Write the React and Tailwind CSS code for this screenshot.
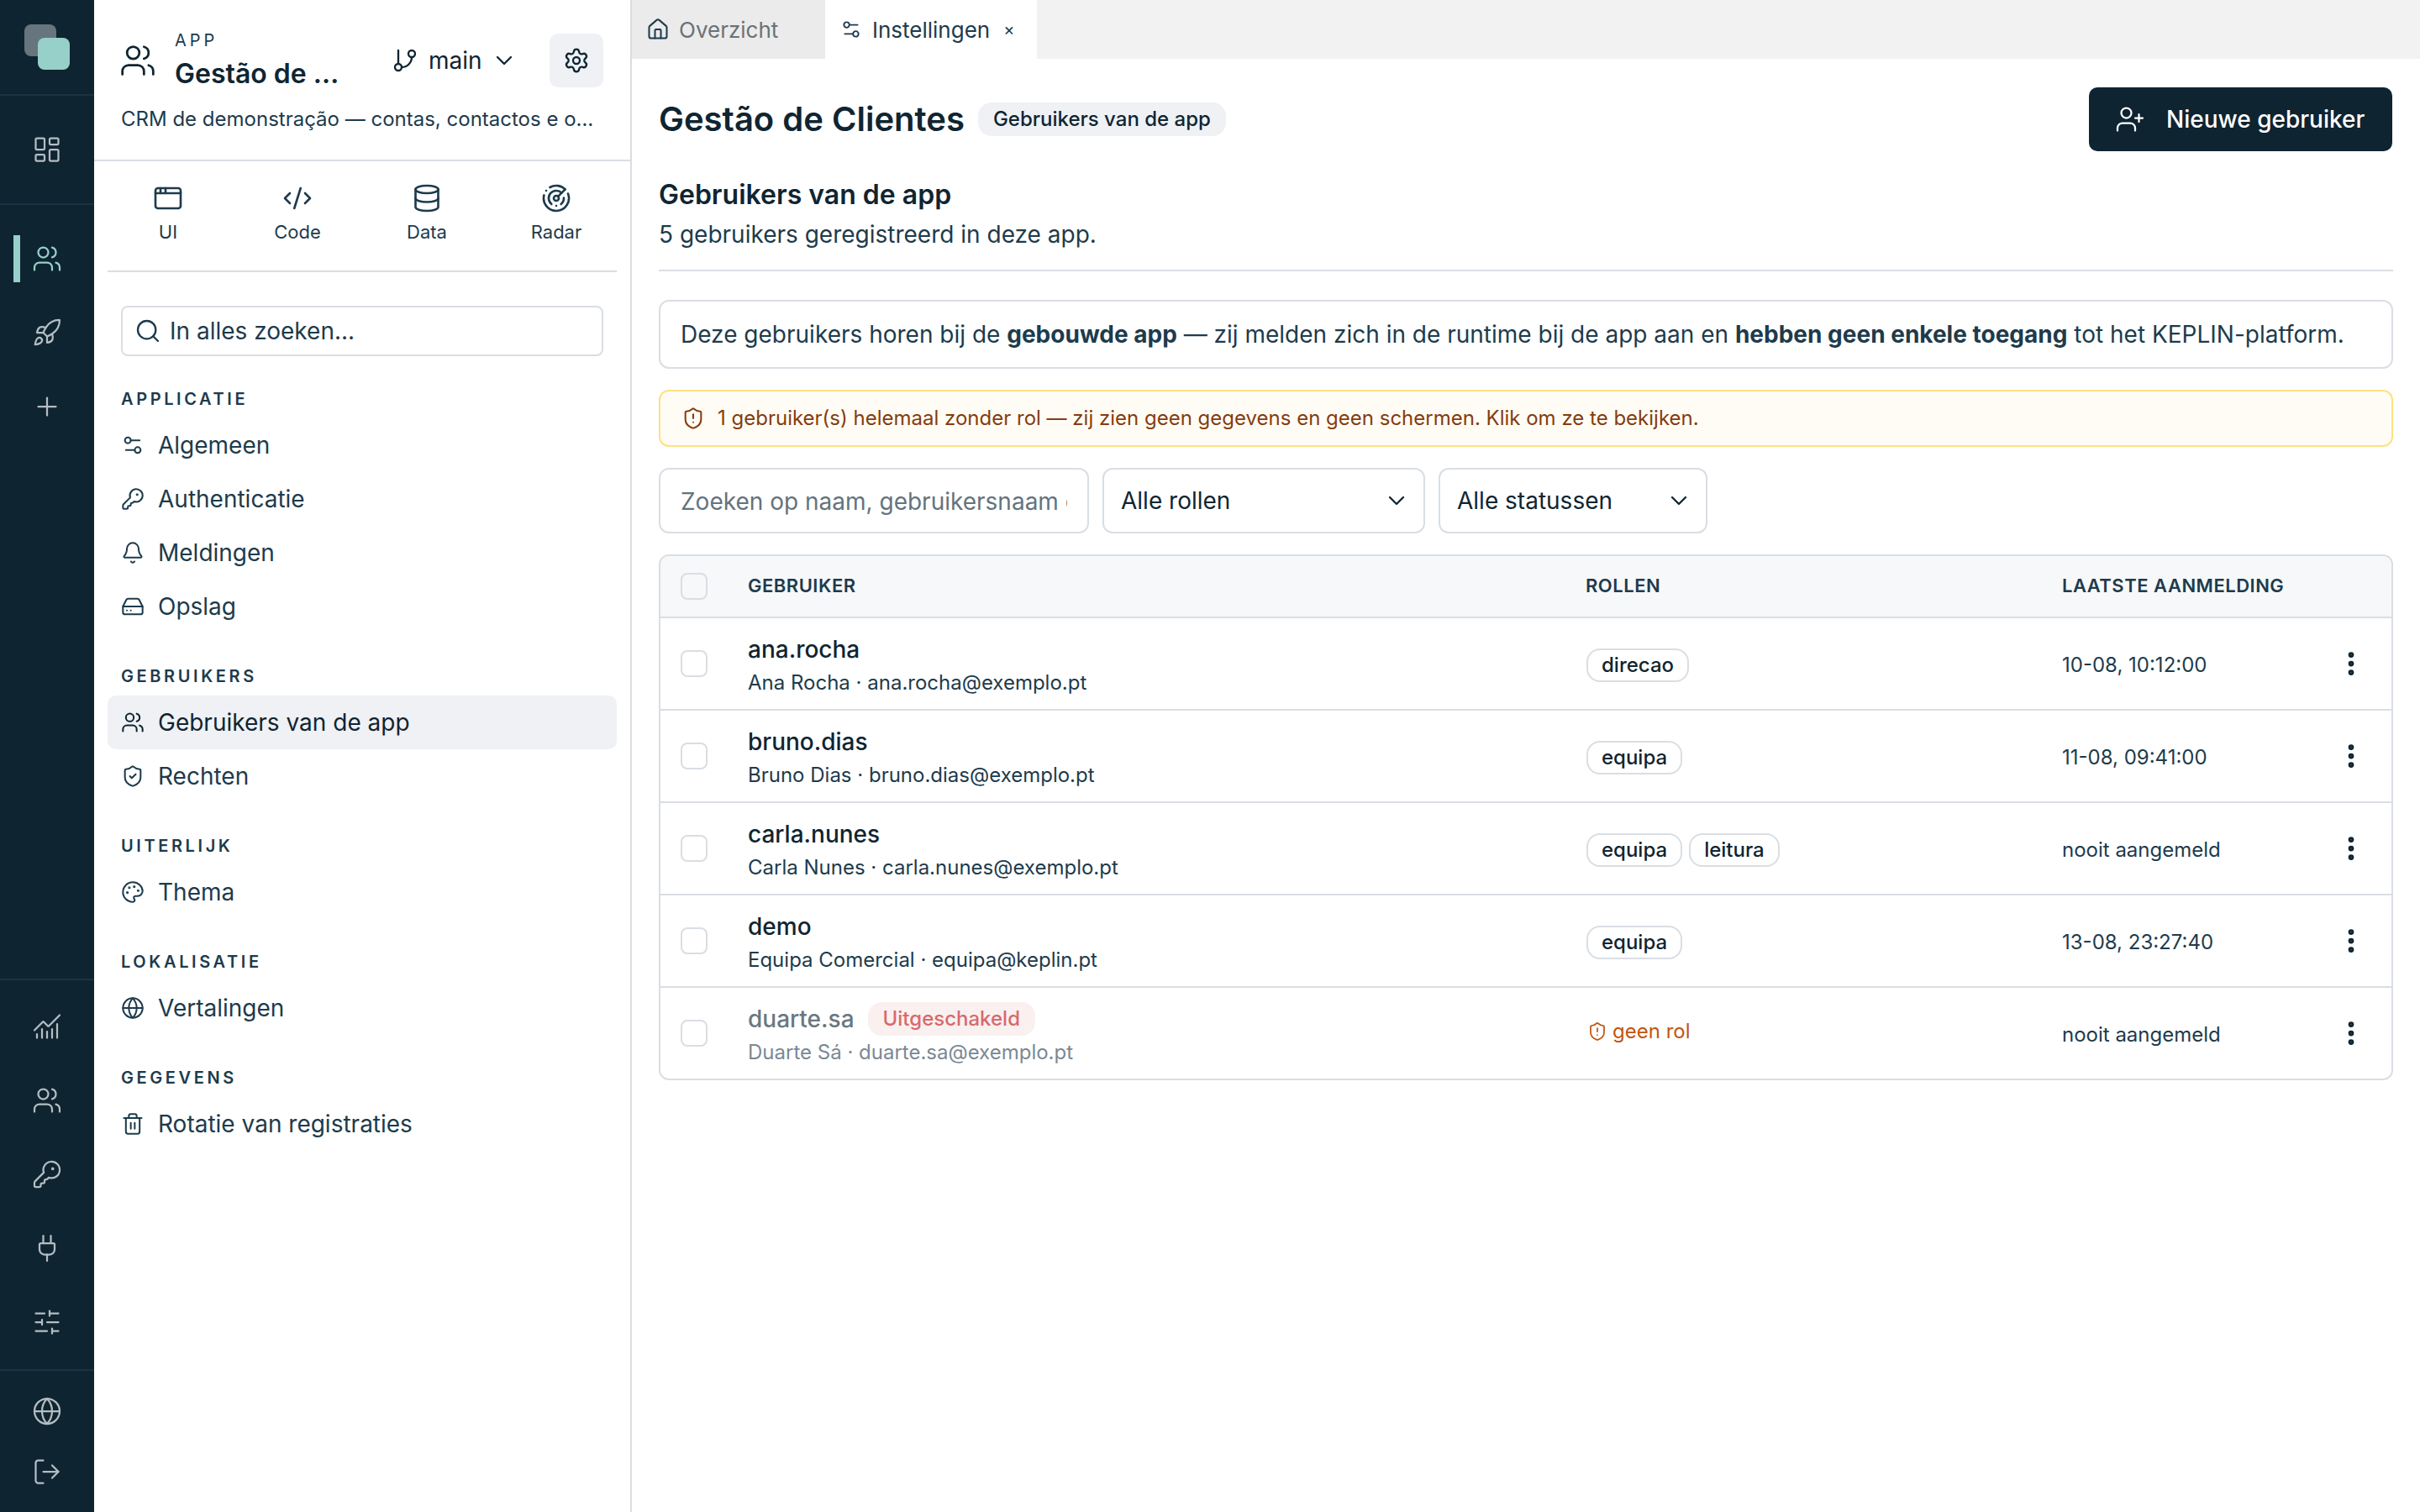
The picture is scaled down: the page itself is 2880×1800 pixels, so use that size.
import React from 'react';
import {
  LayoutDashboard, Users, Rocket, Plus, ChartNoAxesCombined, KeyRound, Plug, SlidersHorizontal, Globe, LogOut,
  GitBranch, ChevronDown, Settings, AppWindow, CodeXml, Database, Radar, Search, Settings2, Bell, HardDrive,
  ShieldCheck, Palette, Trash2, House, UserPlus, ShieldAlert, EllipsisVertical,
} from 'lucide-react';

const sections = [
  { label: 'APPLICATIE', items: [
    { icon: Settings2, text: 'Algemeen' },
    { icon: KeyRound, text: 'Authenticatie' },
    { icon: Bell, text: 'Meldingen' },
    { icon: HardDrive, text: 'Opslag' },
  ] },
  { label: 'GEBRUIKERS', items: [
    { icon: Users, text: 'Gebruikers van de app', active: true },
    { icon: ShieldCheck, text: 'Rechten' },
  ] },
  { label: 'UITERLIJK', items: [{ icon: Palette, text: 'Thema' }] },
  { label: 'LOKALISATIE', items: [{ icon: Globe, text: 'Vertalingen' }] },
  { label: 'GEGEVENS', items: [{ icon: Trash2, text: 'Rotatie van registraties' }] },
];

const users = [
  { name: 'ana.rocha', sub: 'Ana Rocha · ana.rocha@exemplo.pt', roles: ['direcao'], last: '10-08, 10:12:00' },
  { name: 'bruno.dias', sub: 'Bruno Dias · bruno.dias@exemplo.pt', roles: ['equipa'], last: '11-08, 09:41:00' },
  { name: 'carla.nunes', sub: 'Carla Nunes · carla.nunes@exemplo.pt', roles: ['equipa', 'leitura'], last: 'nooit aangemeld' },
  { name: 'demo', sub: 'Equipa Comercial · equipa@keplin.pt', roles: ['equipa'], last: '13-08, 23:27:40' },
  { name: 'duarte.sa', sub: 'Duarte Sá · duarte.sa@exemplo.pt', roles: [], last: 'nooit aangemeld', disabled: true },
];

function RailButton({ icon: Icon, active }) {
  return (
    <div className="relative flex h-[56px] w-full items-center justify-center">
      {active && <div className="absolute left-[16px] top-0 h-[56px] w-[8px] bg-[#97d0c8]" />}
      <Icon size={36} strokeWidth={1.5} className={active ? 'text-[#97d0c8]' : 'text-[#b4bdc2]'} />
    </div>
  );
}

function Rail() {
  return (
    <aside className="flex h-[1800px] w-[112px] shrink-0 flex-col bg-[#0e2431]">
      <div className="h-[114px] shrink-0 border-b-2 border-[#1a3341] pl-[29px] pt-[29px]">
        <div className="relative h-[54px] w-[54px]">
          <div className="absolute left-0 top-0 h-[38px] w-[38px] rounded-[8px] bg-[#66757e]" />
          <div className="absolute left-[16px] top-[16px] h-[38px] w-[38px] rounded-[8px] bg-[#97d0c8]" />
        </div>
      </div>
      <div className="flex h-[130px] shrink-0 items-center border-b-2 border-[#1a3341]">
        <RailButton icon={LayoutDashboard} />
      </div>
      <div className="flex flex-1 flex-col gap-[32px] pt-[36px]">
        <RailButton icon={Users} active />
        <RailButton icon={Rocket} />
        <RailButton icon={Plus} />
      </div>
      <div className="flex shrink-0 flex-col gap-[32px] border-t-2 border-[#1a3341] pb-[28px] pt-[27px]">
        <RailButton icon={ChartNoAxesCombined} />
        <RailButton icon={Users} />
        <RailButton icon={KeyRound} />
        <RailButton icon={Plug} />
        <RailButton icon={SlidersHorizontal} />
      </div>
      <div className="flex shrink-0 flex-col gap-[16px] border-t-2 border-[#1a3341] pb-[20px] pt-[20px]">
        <RailButton icon={Globe} />
        <RailButton icon={LogOut} />
      </div>
    </aside>
  );
}

function Sidebar() {
  const tools = [
    { icon: AppWindow, text: 'UI' },
    { icon: CodeXml, text: 'Code' },
    { icon: Database, text: 'Data' },
    { icon: Radar, text: 'Radar' },
  ];
  return (
    <aside className="h-[1800px] w-[640px] shrink-0 border-r-2 border-[#d9dee3] bg-white text-[#1d3b4c]">
      <div className="h-[192px] border-b-2 border-[#d9dee3] px-[32px] pt-[40px]">
        <div className="flex h-[64px] items-center">
          <Users size={44} strokeWidth={1.5} className="-ml-[2px] shrink-0 text-[#0f2532]" />
          <div className="ml-[22px] w-[204px]">
            <div className="text-[20px] leading-[22px] tracking-[0.2em]">APP</div>
            <div className="mt-[9px] truncate text-[32px] font-semibold leading-[40px] text-[#0f2532]">Gestão de Clientes</div>
          </div>
          <div className="ml-[54px] flex items-center">
            <GitBranch size={32} strokeWidth={1.75} className="text-[#0f2532]" />
            <span className="ml-[12px] text-[28px] text-[#0f2532]">main</span>
            <ChevronDown size={32} strokeWidth={1.75} className="ml-[10px] text-[#0f2532]" />
          </div>
          <div className="ml-auto flex h-[64px] w-[64px] items-center justify-center rounded-[10px] bg-[#eff1f5]">
            <Settings size={32} strokeWidth={1.75} className="text-[#0f2532]" />
          </div>
        </div>
        <div className="mt-[22px] w-[572px] truncate text-[24px] leading-[32px]">CRM de demonstração — contas, contactos e oportunidades</div>
      </div>

      <div className="ml-[16px] w-[606px] border-b-2 border-[#d9dee3]">
        <div className="-ml-[5px] grid h-[130px] w-[616px] grid-cols-4 pt-[26px]">
          {tools.map(({ icon: Icon, text }) => (
            <div key={text} className="flex flex-col items-center">
              <Icon size={36} strokeWidth={1.75} />
              <span className="mt-[7px] text-[22px] leading-[30px]">{text}</span>
            </div>
          ))}
        </div>
      </div>

      <div className="ml-[32px] mt-[40px] flex h-[60px] w-[574px] items-center rounded-[8px] border-2 border-[#d9dee3] pl-[14px]">
        <Search size={32} strokeWidth={1.75} />
        <span className="ml-[10px] text-[28px]">In alles zoeken...</span>
      </div>

      <nav className="ml-[16px] w-[606px]">
        {sections.map((s) => (
          <div key={s.label} className="mt-[36px]">
            <div className="mb-[8px] pl-[16px] text-[20px] font-semibold leading-[30px] tracking-[0.18em]">{s.label}</div>
            {s.items.map(({ icon: Icon, text, active }) => (
              <div key={text} className={`flex h-[64px] items-center rounded-[10px] pl-[16px] ${active ? 'bg-[#eff1f5] text-[#0f2532]' : ''}`}>
                <Icon size={28} strokeWidth={1.75} />
                <span className="ml-[16px] text-[28px]">{text}</span>
              </div>
            ))}
          </div>
        ))}
      </nav>
    </aside>
  );
}

function Tabs() {
  return (
    <div className="flex h-[70px] bg-[#f2f2f2]">
      <div className="flex w-[230px] items-center bg-[#ebebeb] pl-[17px] text-[#6b7176]">
        <House size={28} strokeWidth={1.75} className="text-[#1d3b4c]" />
        <span className="ml-[11px] text-[26px]">Overzicht</span>
      </div>
      <div className="flex w-[252px] items-center bg-white pl-[18px] text-[#1d3b4c]">
        <Settings2 size={26} strokeWidth={1.75} />
        <span className="ml-[12px] text-[26px]">Instellingen</span>
        <span className="ml-[16px] text-[20px] leading-none">×</span>
      </div>
    </div>
  );
}

function Chevron() {
  return <ChevronDown size={32} strokeWidth={1.75} className="text-[#0f2532]" />;
}

function UserRow({ u }) {
  return (
    <div className="grid h-[110px] grid-cols-[104px_998px_566px_1fr] items-center border-t-2 border-[#d9dee3]">
      <div className="pl-[24px]">
        <div className="h-[32px] w-[32px] rounded-[8px] border-2 border-[#d9dee3] bg-white" />
      </div>
      <div className="pt-[2px]">
        <div className="flex h-[40px] items-center">
          <span className={`text-[28px] font-medium ${u.disabled ? 'text-[#69787f]' : 'text-[#0f2532]'}`}>{u.name}</span>
          {u.disabled && <span className="ml-[16px] flex h-[40px] items-center rounded-[16px] bg-[#faf0f0] px-[18px] text-[24px] font-medium text-[#d8696c]">Uitgeschakeld</span>}
        </div>
        <div className={`mt-[3px] text-[24px] leading-[34px] ${u.disabled ? 'text-[#7a8993]' : 'text-[#1d3b4c]'}`}>{u.sub}</div>
      </div>
      <div className="flex gap-[8px] pt-[4px]">
        {u.roles.map((r) => (
          <span key={r} className="flex h-[40px] items-center rounded-[16px] border-2 border-[#d9dee3] px-[16px] text-[24px] font-medium text-[#0f2532]">{r}</span>
        ))}
        {u.roles.length === 0 && (
          <span className="-mt-[8px] ml-[1px] flex items-center text-[24px] text-[#c2540f]">
            <ShieldAlert size={24} strokeWidth={1.75} />
            <span className="ml-[6px]">geen rol</span>
          </span>
        )}
      </div>
      <div className="flex items-center justify-between pr-[30px] pt-[3px] text-[24px] text-[#1d3b4c]">
        <span>{u.last}</span>
        <EllipsisVertical size={36} strokeWidth={2.5} className="-mt-[3px] text-[#0f2532]" />
      </div>
    </div>
  );
}

function Main() {
  return (
    <main className="h-[1800px] flex-1 bg-white text-[#1d3b4c]">
      <Tabs />
      <div className="pl-[32px] pr-[32px]">
        <div className="flex h-[142px] items-center justify-between pt-[2px]">
          <div className="flex items-center">
            <h1 className="text-[40px] font-semibold text-[#0f2532]">Gestão de Clientes</h1>
            <span className="ml-[16px] flex h-[40px] items-center rounded-[16px] bg-[#eff1f5] px-[18px] text-[24px] font-medium text-[#0f2532]">Gebruikers van de app</span>
          </div>
          <button className="mr-[1px] flex h-[76px] w-[361px] items-center rounded-[10px] bg-[#0e2431] pl-[31px] text-white">
            <UserPlus size={36} strokeWidth={1.5} />
            <span className="ml-[25px] text-[28px] font-medium">Nieuwe gebruiker</span>
          </button>
        </div>

        <div className="h-[111px] border-b-2 border-[#d9dee3]">
          <h2 className="text-[32px] font-semibold leading-[40px] text-[#0f2532]">Gebruikers van de app</h2>
          <p className="mt-[7px] text-[28px] leading-[40px]">5 gebruikers geregistreerd in deze app.</p>
        </div>

        <div className="mt-[34px] flex h-[82px] items-center rounded-[12px] border-2 border-[#d9dee3] pl-[24px] text-[28px]">
          <p>Deze gebruikers horen bij de <strong className="font-bold">gebouwde app</strong> — zij melden zich in de runtime bij de app aan en <strong className="font-bold">hebben geen enkele toegang</strong> tot het KEPLIN-platform.</p>
        </div>

        <div className="mt-[25px] flex h-[68px] items-center rounded-[12px] border-2 border-[#fbe183] bg-[#fffcf5] pl-[25px] text-[24px] text-[#853c0e]">
          <ShieldAlert size={28} strokeWidth={1.75} />
          <span className="ml-[15px]">1 gebruiker(s) helemaal zonder rol — zij zien geen gegevens en geen schermen. Klik om ze te bekijken.</span>
        </div>

        <div className="mt-[25px] flex gap-[16px]">
          <input
            readOnly
            placeholder="Zoeken op naam, gebruikersnaam of e-mail..."
            className="h-[78px] w-[512px] rounded-[12px] border-2 border-[#d9dee3] px-[24px] pt-[2px] text-[28px] outline-none placeholder:text-[#64737d]"
          />
          <div className="flex h-[78px] w-[384px] items-center justify-between rounded-[12px] border-2 border-[#d9dee3] pl-[20px] pr-[16px] text-[28px] text-[#0f2532]">
            Alle rollen <Chevron />
          </div>
          <div className="flex h-[78px] w-[320px] items-center justify-between rounded-[12px] border-2 border-[#d9dee3] pl-[20px] pr-[16px] text-[28px] text-[#0f2532]">
            Alle statussen <Chevron />
          </div>
        </div>

        <div className="mt-[25px] overflow-hidden rounded-[12px] border-2 border-[#d9dee3]">
          <div className="grid h-[72px] grid-cols-[104px_997px_567px_1fr] items-center bg-[#f7f8fa] pb-[2px] text-[22px] font-semibold tracking-[0.5px]">
            <div className="pl-[24px]">
              <div className="mt-[2px] h-[32px] w-[32px] rounded-[8px] border-2 border-[#d9dee3] bg-[#f7f8fa]" />
            </div>
            <div>GEBRUIKER</div>
            <div>ROLLEN</div>
            <div>LAATSTE AANMELDING</div>
          </div>
          {users.map((u) => <UserRow key={u.name} u={u} />)}
        </div>
      </div>
    </main>
  );
}

export default function App() {
  return (
    <div className="flex h-[1800px] w-[2880px] overflow-hidden bg-white font-[Inter,sans-serif]">
      <Rail />
      <Sidebar />
      <Main />
    </div>
  );
}
